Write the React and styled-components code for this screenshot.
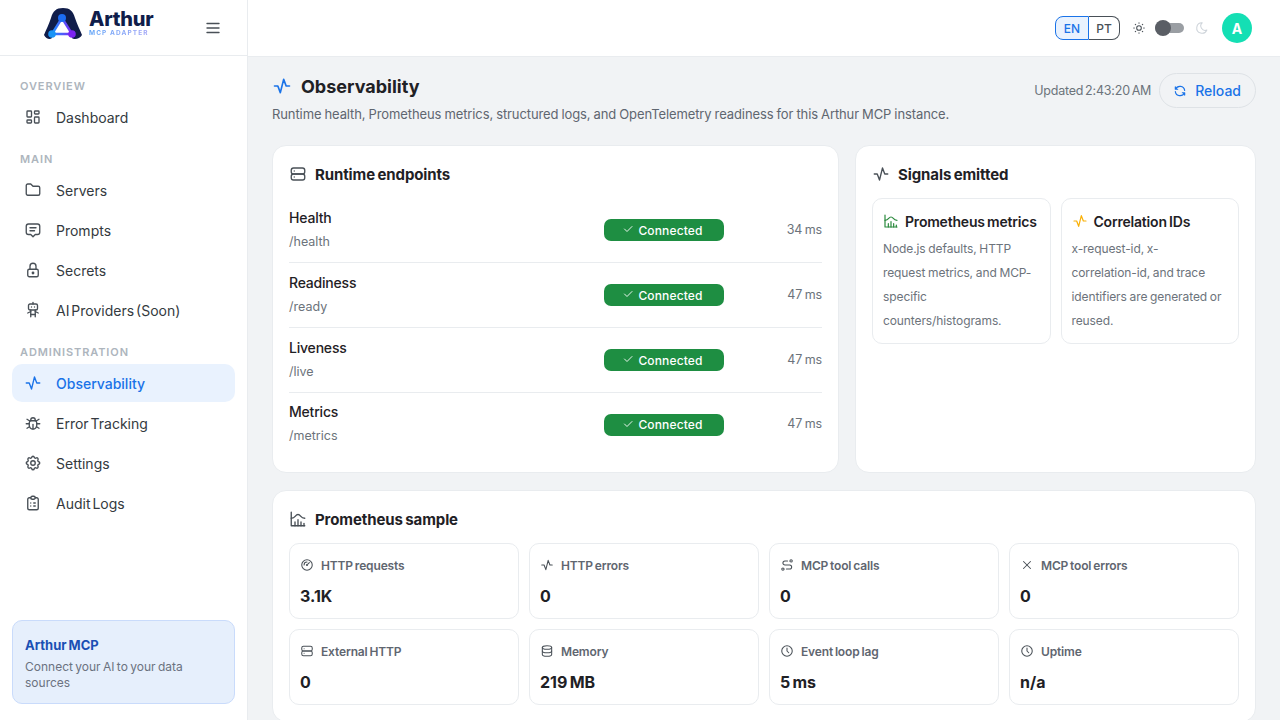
import React from 'react';
import styled, { createGlobalStyle } from 'styled-components';
import {
  TbActivity,
  TbBug,
  TbChartHistogram,
  TbCheck,
  TbClipboardList,
  TbClock,
  TbDatabase,
  TbFolder,
  TbGauge,
  TbLayoutDashboard,
  TbLock,
  TbMenu2,
  TbMessage2,
  TbMoon,
  TbRefresh,
  TbRobot,
  TbRoute,
  TbServer,
  TbSettings,
  TbSun,
  TbX,
} from 'react-icons/tb';

const GlobalStyle = createGlobalStyle`
  * { box-sizing: border-box; }
  html, body { margin: 0; height: 100%; overflow: hidden; }
  body {
    background: #f1f3f5;
    color: #1f2125;
    font-family: Inter, "Open Sans", "Liberation Sans", sans-serif;
  }
  svg { stroke-width: 1.8; }
`;

const navGroups = [
  { title: 'OVERVIEW', items: [{ label: 'Dashboard', icon: TbLayoutDashboard }] },
  {
    title: 'MAIN',
    items: [
      { label: 'Servers', icon: TbFolder },
      { label: 'Prompts', icon: TbMessage2 },
      { label: 'Secrets', icon: TbLock },
      { label: 'AI Providers (Soon)', icon: TbRobot },
    ],
  },
  {
    title: 'ADMINISTRATION',
    items: [
      { label: 'Observability', icon: TbActivity, active: true },
      { label: 'Error Tracking', icon: TbBug },
      { label: 'Settings', icon: TbSettings },
      { label: 'Audit Logs', icon: TbClipboardList },
    ],
  },
];

const endpoints = [
  { name: 'Health', path: '/health', time: '34 ms' },
  { name: 'Readiness', path: '/ready', time: '47 ms' },
  { name: 'Liveness', path: '/live', time: '47 ms' },
  { name: 'Metrics', path: '/metrics', time: '47 ms' },
];

const metrics = [
  { label: 'HTTP requests', value: '3.1K', icon: TbGauge },
  { label: 'HTTP errors', value: '0', icon: TbActivity },
  { label: 'MCP tool calls', value: '0', icon: TbRoute },
  { label: 'MCP tool errors', value: '0', icon: TbX },
  { label: 'External HTTP', value: '0', icon: TbServer },
  { label: 'Memory', value: '219 MB', icon: TbDatabase },
  { label: 'Event loop lag', value: '5 ms', icon: TbClock },
  { label: 'Uptime', value: 'n/a', icon: TbClock },
];

const Logo = () => (
  <LogoWrap>
    <svg width="40" height="33" viewBox="0 7 40 33" fill="none">
      <defs>
        <linearGradient id="logoLine" x1="9" y1="30" x2="29" y2="30" gradientUnits="userSpaceOnUse">
          <stop stopColor="#1e90ff" />
          <stop offset="1" stopColor="#7c2cf5" />
        </linearGradient>
      </defs>
      <path
        d="M1 35 C3 30 6 24 8 18 C10 11 13 8 20 8 C27 8 30 11 32 18 C34 24 37 30 39 35 C37 39 31 40 29 38 V34 H9 V38 C7 40 3 39 1 35 Z"
        fill="#101d4a"
      />
      <path
        d="M19 18 L9 34 H29 Z"
        fill="#fff"
        stroke="url(#logoLine)"
        strokeWidth="2.400"
        strokeLinejoin="round"
      />
      <circle cx="19" cy="18" r="4" fill="#1c6cf2" />
      <circle cx="9" cy="34" r="3.800" fill="#1a94f5" />
      <circle cx="29" cy="34" r="3.800" fill="#7a22f2" />
    </svg>
    <LogoText>
      <LogoName>Arthur</LogoName>
      <LogoTag>MCP ADAPTER</LogoTag>
    </LogoText>
  </LogoWrap>
);

const App = () => (
  <Shell>
    <GlobalStyle />
    <Sidebar>
      <Brand>
        <Logo />
        <MenuButton>
          <TbMenu2 size={18} />
        </MenuButton>
      </Brand>
      <Nav>
        {navGroups.map((group) => (
          <NavGroup key={group.title}>
            <NavTitle>{group.title}</NavTitle>
            {group.items.map(({ label, icon: Icon, active }) => (
              <NavItem key={label} $active={active}>
                <Icon size={18} />
                <span>{label}</span>
              </NavItem>
            ))}
          </NavGroup>
        ))}
      </Nav>
      <Promo>
        <PromoTitle>Arthur MCP</PromoTitle>
        <PromoText>Connect your AI to your data sources</PromoText>
      </Promo>
    </Sidebar>
    <Main>
      <Topbar>
        <LangGroup>
          <LangButton $active>EN</LangButton>
          <LangButton>PT</LangButton>
        </LangGroup>
        <TbSun size={14} color="#495057" />
        <Switch>
          <SwitchThumb />
        </Switch>
        <TbMoon size={14} color="#ced4da" />
        <Avatar>A</Avatar>
      </Topbar>
      <Content>
        <PageHead>
          <div>
            <PageTitle>
              <TbActivity size={20} color="#1a73e8" />
              <h1>Observability</h1>
            </PageTitle>
            <PageSub>
              Runtime health, Prometheus metrics, structured logs, and OpenTelemetry readiness for this Arthur MCP
              instance.
            </PageSub>
          </div>
          <PageActions>
            <Updated>Updated 2:43:20 AM</Updated>
            <ReloadButton>
              <TbRefresh size={14} />
              Reload
            </ReloadButton>
          </PageActions>
        </PageHead>
        <TopCards>
          <Card>
            <CardTitle>
              <TbServer size={18} color="#495057" />
              Runtime endpoints
            </CardTitle>
            {endpoints.map((row) => (
              <EndpointRow key={row.name}>
                <div>
                  <EndpointName>{row.name}</EndpointName>
                  <EndpointPath>{row.path}</EndpointPath>
                </div>
                <StatusChip>
                  <TbCheck size={12} />
                  Connected
                </StatusChip>
                <Latency>{row.time}</Latency>
              </EndpointRow>
            ))}
          </Card>
          <Card>
            <CardTitle>
              <TbActivity size={18} color="#495057" />
              Signals emitted
            </CardTitle>
            <SignalGrid>
              <SignalCard>
                <SignalTitle>
                  <TbChartHistogram size={16} color="#2b8a3e" />
                  Prometheus metrics
                </SignalTitle>
                <SignalText>Node.js defaults, HTTP request metrics, and MCP-specific counters/histograms.</SignalText>
              </SignalCard>
              <SignalCard>
                <SignalTitle>
                  <TbActivity size={16} color="#fab005" />
                  Correlation IDs
                </SignalTitle>
                <SignalText>
                  x-request-id, x-
                  <br />
                  correlation-id, and trace identifiers are generated or reused.
                </SignalText>
              </SignalCard>
            </SignalGrid>
          </Card>
        </TopCards>
        <Card>
          <CardTitle>
            <TbChartHistogram size={18} color="#495057" />
            Prometheus sample
          </CardTitle>
          <MetricGrid>
            {metrics.map(({ label, value, icon: Icon }) => (
              <MetricCard key={label}>
                <MetricLabel>
                  <Icon size={14} color="#495057" />
                  {label}
                </MetricLabel>
                <MetricValue>{value}</MetricValue>
              </MetricCard>
            ))}
          </MetricGrid>
        </Card>
      </Content>
    </Main>
  </Shell>
);

export default App;

const Shell = styled.div`
  display: flex;
  height: 720px;
  overflow: hidden;
`;

const Sidebar = styled.aside`
  display: flex;
  flex-direction: column;
  flex: 0 0 248px;
  background: #fff;
  border-right: 1px solid #e9ecef;
`;

const Brand = styled.div`
  display: flex;
  align-items: center;
  justify-content: space-between;
  height: 56px;
  padding: 0 25px 0 43px;
  border-bottom: 1px solid #e9ecef;
`;

const LogoWrap = styled.div`
  display: flex;
  align-items: center;
  gap: 6px;
  margin-top: -8px;
`;

const LogoText = styled.div`
  display: flex;
  flex-direction: column;
`;

const LogoName = styled.span`
  color: #101d4a;
  font-size: 20px;
  font-weight: 800;
  line-height: 18px;
  letter-spacing: -0.2px;
`;

const LogoTag = styled.span`
  margin-top: 2px;
  background: linear-gradient(90deg, #5fa4f8, #a7a4f6);
  background-clip: text;
  color: transparent;
  font-size: 6.500px;
  font-weight: 700;
  line-height: 7px;
  letter-spacing: 1.100px;
  white-space: nowrap;
`;

const MenuButton = styled.div`
  display: flex;
  color: #495057;
`;

const Nav = styled.nav`
  display: flex;
  flex: 1;
  flex-direction: column;
  gap: 15px;
  padding: 22px 12px 0;
`;

const NavGroup = styled.div`
  display: flex;
  flex-direction: column;
  gap: 2px;
`;

const NavTitle = styled.div`
  padding: 0 8px;
  height: 18px;
  color: #adb5bd;
  font-size: 11px;
  font-weight: 600;
  line-height: 16px;
  letter-spacing: 0.9px;
`;

const NavItem = styled.div`
  display: flex;
  align-items: center;
  gap: 14px;
  height: 38px;
  padding: 0 12px;
  border-radius: 10px;
  background: ${(p) => (p.$active ? '#e9f2fe' : 'transparent')};
  color: ${(p) => (p.$active ? '#1a73e8' : '#343a40')};
  font-size: 14px;
  font-weight: ${(p) => (p.$active ? 500 : 400)};
  word-spacing: -2px;

  svg {
    flex: none;
    color: ${(p) => (p.$active ? '#1a73e8' : '#495057')};
  }
`;

const Promo = styled.div`
  height: 84px;
  margin: 0 12px 16px;
  padding: 15px 12px;
  border: 1px solid #c9dbfb;
  border-radius: 10px;
  background: #e6effc;
`;

const PromoTitle = styled.div`
  color: #1a4fb4;
  font-size: 13px;
  font-weight: 700;
  line-height: 18px;
  word-spacing: -1px;
`;

const PromoText = styled.div`
  margin-top: 5px;
  color: #6b7280;
  font-size: 12px;
  line-height: 16px;
  word-spacing: -1px;
`;

const Main = styled.main`
  display: flex;
  flex: 1;
  flex-direction: column;
  min-width: 0;
`;

const Topbar = styled.header`
  display: flex;
  flex: 0 0 57px;
  align-items: center;
  justify-content: flex-end;
  gap: 11px;
  padding: 0 28px 0 0;
  background: #fff;
  border-bottom: 1px solid #e9ecef;
`;

const LangGroup = styled.div`
  display: flex;
  margin-right: 1px;
`;

const LangButton = styled.div`
  display: flex;
  align-items: center;
  justify-content: center;
  width: ${(p) => (p.$active ? '34px' : '31px')};
  height: 24px;
  border: 1px solid ${(p) => (p.$active ? '#1a73e8' : '#495057')};
  border-left-width: ${(p) => (p.$active ? '1px' : '0')};
  border-radius: ${(p) => (p.$active ? '8px 0 0 8px' : '0 8px 8px 0')};
  background: ${(p) => (p.$active ? '#e9f2fe' : '#fff')};
  color: ${(p) => (p.$active ? '#1a73e8' : '#495057')};
  font-size: 12px;
  font-weight: 500;
`;

const Switch = styled.div`
  position: relative;
  width: 29px;
  height: 10px;
  margin-left: -2px;
  border-radius: 5px;
  background: #9a9ea3;
`;

const SwitchThumb = styled.div`
  position: absolute;
  top: -3px;
  left: 0;
  width: 16px;
  height: 16px;
  border-radius: 50%;
  background: #5a5e65;
`;

const Avatar = styled.div`
  display: flex;
  align-items: center;
  justify-content: center;
  width: 30px;
  height: 30px;
  margin-left: 2px;
  border-radius: 50%;
  background: #14dfb4;
  color: #fff;
  font-size: 14px;
  font-weight: 700;
`;

const Content = styled.div`
  display: flex;
  flex-direction: column;
  gap: 17px;
  padding: 15px 24px 0;
`;

const PageHead = styled.div`
  display: flex;
  align-items: flex-start;
  justify-content: space-between;
  margin-bottom: 4px;
`;

const PageTitle = styled.div`
  display: flex;
  align-items: center;
  gap: 9px;
  height: 28px;

  h1 {
    margin: 0;
    font-size: 18px;
    font-weight: 700;
  }

  svg {
    stroke-width: 2;
  }
`;

const PageSub = styled.div`
  margin-top: 4px;
  color: #5f6670;
  font-size: 13px;
  line-height: 20px;
  letter-spacing: -0.1px;
  word-spacing: -0.5px;
`;

const PageActions = styled.div`
  display: flex;
  align-items: center;
  gap: 8px;
  margin-top: 1px;
`;

const Updated = styled.span`
  color: #6c737b;
  font-size: 12.500px;
  letter-spacing: -0.2px;
  word-spacing: -1.500px;
`;

const ReloadButton = styled.div`
  display: flex;
  align-items: center;
  gap: 8px;
  height: 35px;
  padding: 0 14px 0 13px;
  border: 1px solid #dee2e6;
  border-radius: 18px;
  color: #1a73e8;
  font-size: 14px;
  font-weight: 500;

  svg {
    stroke-width: 2;
  }
`;

const TopCards = styled.div`
  display: grid;
  grid-template-columns: 567px 401px;
  gap: 16px;
`;

const Card = styled.section`
  padding: 16px;
  border: 1px solid #e9ecef;
  border-radius: 14px;
  background: #fff;
`;

const CardTitle = styled.h2`
  display: flex;
  align-items: center;
  gap: 8px;
  height: 24px;
  margin: 0 0 12px;
  font-size: 15px;
  font-weight: 700;
  letter-spacing: -0.1px;
  word-spacing: -1px;
`;

const EndpointRow = styled.div`
  display: grid;
  grid-template-columns: 1fr 120px 98px;
  align-items: center;
  height: 65px;
  padding: 0 0 2px;
  border-bottom: 1px solid #e9ecef;

  &:last-child {
    height: 63px;
    border-bottom: 0;
  }
`;

const EndpointName = styled.div`
  font-size: 14px;
  font-weight: 500;
  line-height: 22px;
  letter-spacing: -0.2px;
`;

const EndpointPath = styled.div`
  margin-top: 3px;
  color: #6c737b;
  font-size: 12.500px;
  line-height: 20px;
`;

const StatusChip = styled.div`
  display: flex;
  align-items: center;
  justify-content: center;
  gap: 4px;
  height: 22px;
  margin-top: 2px;
  padding-right: 3px;
  border-radius: 7px;
  background: #1e8e42;
  color: #fff;
  font-size: 12px;
  font-weight: 500;
  letter-spacing: 0.15px;

  svg {
    margin-top: -2px;
  }
`;

const Latency = styled.div`
  color: #6c737b;
  font-size: 12.500px;
  letter-spacing: -0.1px;
  word-spacing: -1px;
  text-align: right;
`;

const SignalGrid = styled.div`
  display: grid;
  grid-template-columns: 1fr 1fr;
  gap: 10px;
`;

const SignalCard = styled.div`
  padding: 12px 10px 10px;
  border: 1px solid #e9ecef;
  border-radius: 10px;
`;

const SignalTitle = styled.div`
  display: flex;
  align-items: center;
  gap: 6px;
  height: 20px;
  font-size: 14px;
  font-weight: 600;
  letter-spacing: -0.2px;
  word-spacing: -1px;
  white-space: nowrap;
`;

const SignalText = styled.div`
  margin-top: 6px;
  color: #6c737b;
  font-size: 12px;
  line-height: 24px;
  letter-spacing: -0.1px;
  word-spacing: -0.5px;
`;

const MetricGrid = styled.div`
  display: grid;
  grid-template-columns: repeat(4, 1fr);
  gap: 10px;
`;

const MetricCard = styled.div`
  height: 76px;
  padding: 11px 10px;
  border: 1px solid #e9ecef;
  border-radius: 10px;
`;

const MetricLabel = styled.div`
  display: flex;
  align-items: center;
  gap: 7px;
  height: 20px;
  color: #5f6670;
  font-size: 12px;
  font-weight: 600;
  letter-spacing: -0.15px;
  word-spacing: -1px;
`;

const MetricValue = styled.div`
  margin-top: 9px;
  font-size: 16px;
  font-weight: 700;
  line-height: 24px;
  word-spacing: -1.500px;
`;
